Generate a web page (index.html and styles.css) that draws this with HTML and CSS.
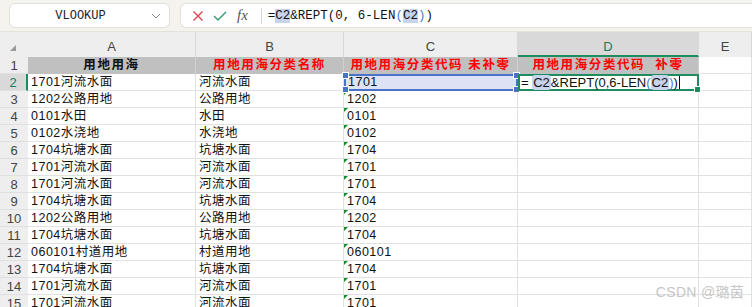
FILE: index.html
```html
<!DOCTYPE html>
<html lang="zh-CN">

<head>
    <meta charset="utf-8">
    <title>VLOOKUP 补零</title>
    <link rel="stylesheet" href="styles.css">
</head>

<body>

    <!-- Formula bar -->
    <div class="topbar">
        <div class="namebox">
            <span class="name">VLOOKUP</span>
            <svg class="chev" width="10" height="6" viewBox="0 0 10 6"><path d="M1 1 L5 5 L9 1" fill="none" stroke="#888" stroke-width="1"/></svg>
        </div>
        <div class="fxbox">
            <svg class="ico" width="12" height="12" viewBox="0 0 12 12"><path d="M1.5 1.5 L10.5 10.5 M10.5 1.5 L1.5 10.5" stroke="#e0424f" stroke-width="1.4"/></svg>
            <svg class="ico" width="14" height="12" viewBox="0 0 14 12"><path d="M1 6 L5 10 L13 2" fill="none" stroke="#2e9e6a" stroke-width="1.4"/></svg>
            <span class="fx">fx</span>
            <span class="sep"></span>
            <span class="formula">=<span class="ref">C2</span>&amp;REPT(0, 6-LEN<span class="blue">(</span><span class="ref">C2</span><span class="blue">)</span>)</span>
        </div>
    </div>

    <!-- Sheet -->
    <div class="sheet">
        <div class="corner"><span class="tri"></span></div>
        <div class="colhead">A</div>
        <div class="colhead">B</div>
        <div class="colhead">C</div>
        <div class="colhead active">D</div>
        <div class="colhead">E</div>

        <div class="rowhead">1</div>
        <div class="cell title">用地用海</div>
        <div class="cell title red">用地用海分类名称</div>
        <div class="cell title red">用地用海分类代码 未补零</div>
        <div class="cell title red">用地用海分类代码&nbsp;&nbsp;补零</div>
        <div class="cell"></div>

        <div class="rowhead active">2</div>
        <div class="cell">1701河流水面</div>
        <div class="cell">河流水面</div>
        <div class="cell code selected">1701<span class="h h1"></span><span class="h h2"></span><span class="h h3"></span><span class="h h4"></span></div>
        <div class="cell editing">=&nbsp;<span class="chip">C2</span>&amp;REPT(0,6-LEN<span class="blue">(</span><span class="chip">C2</span><span class="blue">)</span>)<span class="caret"></span><span class="fill"></span></div>
        <div class="cell"></div>

        <div class="rowhead">3</div>
        <div class="cell">1202公路用地</div>
        <div class="cell">公路用地</div>
        <div class="cell code txt">1202</div>
        <div class="cell"></div>
        <div class="cell"></div>

        <div class="rowhead">4</div>
        <div class="cell">0101水田</div>
        <div class="cell">水田</div>
        <div class="cell code txt">0101</div>
        <div class="cell"></div>
        <div class="cell"></div>

        <div class="rowhead">5</div>
        <div class="cell">0102水浇地</div>
        <div class="cell">水浇地</div>
        <div class="cell code txt">0102</div>
        <div class="cell"></div>
        <div class="cell"></div>

        <div class="rowhead">6</div>
        <div class="cell">1704坑塘水面</div>
        <div class="cell">坑塘水面</div>
        <div class="cell code txt">1704</div>
        <div class="cell"></div>
        <div class="cell"></div>

        <div class="rowhead">7</div>
        <div class="cell">1701河流水面</div>
        <div class="cell">河流水面</div>
        <div class="cell code txt">1701</div>
        <div class="cell"></div>
        <div class="cell"></div>

        <div class="rowhead">8</div>
        <div class="cell">1701河流水面</div>
        <div class="cell">河流水面</div>
        <div class="cell code txt">1701</div>
        <div class="cell"></div>
        <div class="cell"></div>

        <div class="rowhead">9</div>
        <div class="cell">1704坑塘水面</div>
        <div class="cell">坑塘水面</div>
        <div class="cell code txt">1704</div>
        <div class="cell"></div>
        <div class="cell"></div>

        <div class="rowhead">10</div>
        <div class="cell">1202公路用地</div>
        <div class="cell">公路用地</div>
        <div class="cell code txt">1202</div>
        <div class="cell"></div>
        <div class="cell"></div>

        <div class="rowhead">11</div>
        <div class="cell">1704坑塘水面</div>
        <div class="cell">坑塘水面</div>
        <div class="cell code txt">1704</div>
        <div class="cell"></div>
        <div class="cell"></div>

        <div class="rowhead">12</div>
        <div class="cell">060101村道用地</div>
        <div class="cell">村道用地</div>
        <div class="cell code txt">060101</div>
        <div class="cell"></div>
        <div class="cell"></div>

        <div class="rowhead">13</div>
        <div class="cell">1704坑塘水面</div>
        <div class="cell">坑塘水面</div>
        <div class="cell code txt">1704</div>
        <div class="cell"></div>
        <div class="cell"></div>

        <div class="rowhead">14</div>
        <div class="cell">1701河流水面</div>
        <div class="cell">河流水面</div>
        <div class="cell code txt">1701</div>
        <div class="cell"></div>
        <div class="cell"></div>

        <div class="rowhead">15</div>
        <div class="cell">1701河流水面</div>
        <div class="cell">河流水面</div>
        <div class="cell code txt">1701</div>
        <div class="cell"></div>
        <div class="cell"></div>
    </div>

    <div class="watermark">CSDN @璐茵</div>

</body>

</html>
```

FILE: styles.css
```css
body {
    margin: 0;
    padding: 0;
    width: 752px;
    height: 307px;
    overflow: hidden;
    position: relative;
    background: #fff;
    font-family: "Liberation Sans", "Noto Sans CJK SC", sans-serif;
    font-size: 12.5px;
    color: #111;
}

/* formula bar */
.topbar {
    display: flex;
    align-items: center;
    gap: 10px;
    height: 32px;
    padding-left: 9px;
    background: #f5f3ee;
    box-sizing: border-box;
    border-bottom: 1px solid #e4e2dc;
}

.namebox {
    width: 161px;
    height: 25px;
    box-sizing: border-box;
    background: #fff;
    border: 1px solid #e2e0db;
    border-radius: 6px;
    display: flex;
    align-items: center;
    position: relative;
}

.namebox .name {
    flex: 1;
    text-align: center;
    font-family: "Liberation Mono", monospace;
    font-size: 12px;
    padding-right: 18px;
    color: #222;
}

.namebox .chev {
    position: absolute;
    right: 8px;
    top: 9px;
}

.fxbox {
    flex: 1;
    height: 25px;
    box-sizing: border-box;
    background: #fff;
    border: 1px solid #e2e0db;
    border-right: none;
    border-radius: 6px 0 0 6px;
    display: flex;
    align-items: center;
    padding-left: 11px;
    gap: 9px;
}

.fx {
    font-family: "Liberation Serif", serif;
    font-style: italic;
    font-size: 15px;
    color: #555;
    margin-left: 1px;
}

.sep {
    width: 1px;
    height: 16px;
    background: #d6d6d6;
    margin-left: 4px;
}

.formula {
    font-family: "Liberation Mono", monospace;
    font-size: 12.5px;
    color: #111;
    margin-left: -3px;
}

.formula .ref {
    background: #c8d4ec;
}

.blue {
    color: #4a7bd0;
}

/* sheet grid */
.sheet {
    display: grid;
    grid-template-columns: 28px 168px 148px 174px 181px 53px;
    grid-template-rows: 25px;
    grid-auto-rows: 17px;
}

.corner,
.colhead {
    background: #eeeeee;
    border-right: 1px solid #d8d8d8;
    box-sizing: border-box;
    display: flex;
    align-items: flex-end;
    justify-content: center;
    padding-bottom: 2px;
    font-size: 13px;
    color: #444;
    line-height: 17px;
}

.corner {
    position: relative;
    border-right: none;
}

.corner .tri {
    position: absolute;
    left: 10px;
    bottom: 6px;
    width: 0;
    height: 0;
    border-left: 6px solid transparent;
    border-bottom: 6px solid #9a9a9a;
}

.colhead.active {
    background: #d9d9d9;
    color: #1a7a5e;
    border-bottom: 2px solid #1e8c5f;
    padding-bottom: 0;
}

.rowhead {
    background: #eeeeee;
    text-align: center;
    font-size: 13px;
    color: #444;
    line-height: 17px;
    border-bottom: 1px solid #e0e0e0;
    box-sizing: border-box;
}

.rowhead.active {
    background: #d9d9d9;
    color: #1a7a5e;
    border-right: 2px solid #1e8c5f;
}

.cell {
    border-right: 1px solid #e1e1e1;
    border-bottom: 1px solid #e1e1e1;
    box-sizing: border-box;
    padding-left: 3px;
    line-height: 17px;
    white-space: nowrap;
    overflow: hidden;
    letter-spacing: 0.5px;
    position: relative;
}

.cell.title {
    background: #c0c0c0;
    font-weight: bold;
    text-align: center;
    padding-left: 0;
    letter-spacing: 1.6px;
    border-color: #c0c0c0;
    border-right-color: #d0d0d0;
}

.cell.red {
    color: #ff0000;
}

/* numbers stored as text */
.cell.txt::before {
    content: "";
    position: absolute;
    left: 0;
    top: 0;
    border-top: 4px solid #1b8a2e;
    border-right: 4px solid transparent;
}

.cell.selected {
    background: #dde3f5;
    border: 2px solid #4a72c8;
    line-height: 13px;
    padding-left: 2px;
    overflow: visible;
    z-index: 2;
}

.h {
    position: absolute;
    width: 5px;
    height: 5px;
    background: #4a72c8;
    border: 1px solid #fff;
}

.h1 { left: -4px; top: -4px; }
.h2 { right: -4px; top: -4px; }
.h3 { left: -4px; bottom: -4px; }
.h4 { right: -4px; bottom: -4px; }

.cell.editing {
    border: 2px solid #1e8c5f;
    line-height: 13px;
    padding-left: 1px;
    overflow: visible;
    font-size: 13px;
    letter-spacing: 0;
    z-index: 3;
    background: #fff;
}

.chip {
    background: #c8d4ec;
    border-radius: 3px;
    padding: 0 1px;
}

.caret {
    display: inline-block;
    width: 1px;
    height: 13px;
    background: #111;
    vertical-align: top;
    margin-left: 1px;
}

.fill {
    position: absolute;
    right: -4px;
    bottom: -4px;
    width: 5px;
    height: 5px;
    background: #1e8c5f;
    border: 1px solid #fff;
}

.watermark {
    position: absolute;
    right: 8px;
    bottom: 6px;
    font-size: 14px;
    color: #c6c6c6;
    letter-spacing: 0.3px;
}
```
